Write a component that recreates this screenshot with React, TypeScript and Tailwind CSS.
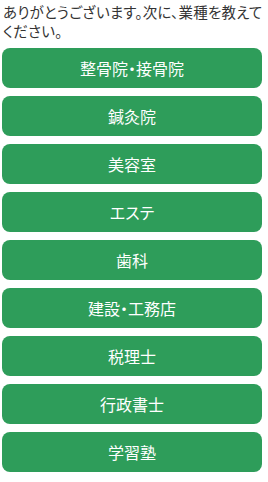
import React from "react";

const items = ["整骨院・接骨院", "鍼灸院", "美容室", "エステ", "歯科", "建設・工務店", "税理士", "行政書士", "学習塾"];

export default function App() {
  return (
    <div className="w-[268px] h-[482px] bg-white pl-[2px] pt-[2px] [font-feature-settings:'palt']" style={{ fontFamily: '"Noto Sans CJK JP", "Noto Sans", sans-serif' }}>
      <p className="text-[14.5px] leading-[19px] tracking-[0.2px] text-[#333333] pl-[1px] w-[264px]">ありがとうございます。次に、業種を教えてください。</p>
      <div className="flex flex-col gap-[8px] mt-[8px] w-[260px]">
        {items.map((t) => (
          <button key={t} className="h-[40px] rounded-[8px] bg-[#2e9d5a] text-white text-[16px] flex items-center justify-center">
            {t}
          </button>
        ))}
      </div>
    </div>
  );
}
